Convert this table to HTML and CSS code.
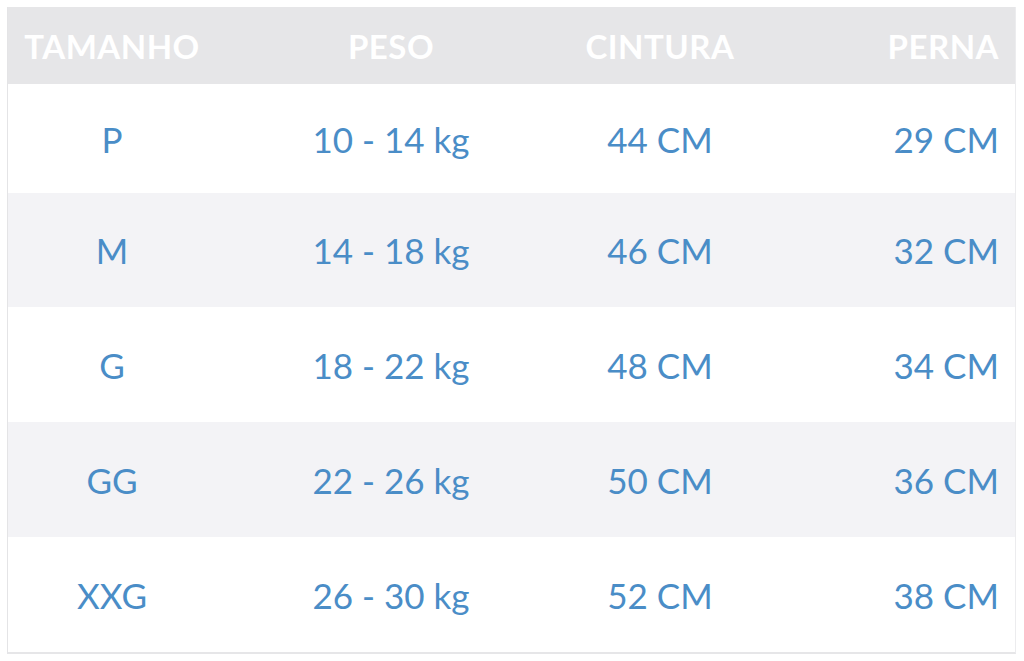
FILE: index.html
```html
<!DOCTYPE html>
<html lang="pt">
<head>
<meta charset="utf-8">
<link rel="stylesheet" href="styles.css">
</head>
<body>
<div class="table">
  <div class="row head">
    <div class="cell">TAMANHO</div>
    <div class="cell">PESO</div>
    <div class="cell">CINTURA</div>
    <div class="cell last">PERNA</div>
  </div>
  <div class="row first">
    <div class="cell">P</div>
    <div class="cell">10 - 14 kg</div>
    <div class="cell">44 CM</div>
    <div class="cell last">29 CM</div>
  </div>
  <div class="row alt second">
    <div class="cell">M</div>
    <div class="cell">14 - 18 kg</div>
    <div class="cell">46 CM</div>
    <div class="cell last">32 CM</div>
  </div>
  <div class="row">
    <div class="cell">G</div>
    <div class="cell">18 - 22 kg</div>
    <div class="cell">48 CM</div>
    <div class="cell last">34 CM</div>
  </div>
  <div class="row alt">
    <div class="cell">GG</div>
    <div class="cell">22 - 26 kg</div>
    <div class="cell">50 CM</div>
    <div class="cell last">36 CM</div>
  </div>
  <div class="row">
    <div class="cell">XXG</div>
    <div class="cell">26 - 30 kg</div>
    <div class="cell">52 CM</div>
    <div class="cell last">38 CM</div>
  </div>
</div>
</body>
</html>
```
FILE: styles.css
```css
html, body {
  margin: 0;
  padding: 0;
  background: #ffffff;
}
body {
  padding: 7px 10px 0 7px;
  font-family: Lato, "Open Sans", sans-serif;
}
.table {
  width: 1007px;
  border-left: 1px solid #e4e4e6;
  border-right: 1px solid #ececee;
  border-bottom: 2px solid #e6e6e8;
}
.row {
  display: grid;
  grid-template-columns: 208px 350px 188px 1fr;
  height: 115px;
  align-items: center;
  background: #ffffff;
  color: #4a8dc7;
  font-size: 35px;
  font-weight: 400;
}
.row.alt {
  background: #f3f3f6;
}
.row.head {
  height: 77px;
  background: #e6e6e8;
  color: #ffffff;
  font-size: 33px;
  font-weight: 700;
  letter-spacing: 0.5px;
}
.row.first {
  height: 109px;
}
.row.second {
  height: 114px;
}
.cell {
  text-align: center;
  white-space: nowrap;
}
.cell.last {
  text-align: right;
  padding-right: 16px;
}
```
